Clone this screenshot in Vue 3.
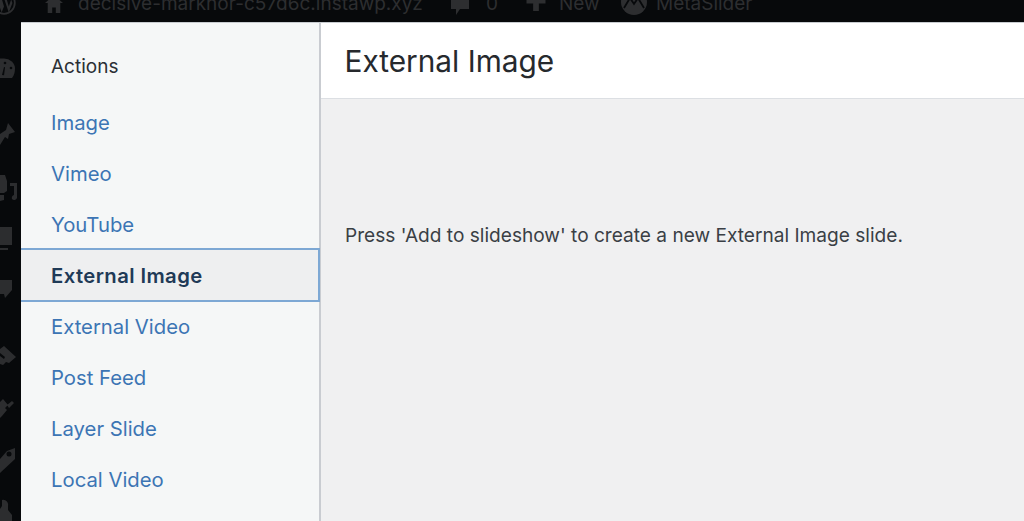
<script setup>
const actions = ['Image', 'Vimeo', 'YouTube', 'External Image', 'External Video', 'Post Feed', 'Layer Slide', 'Local Video']
const activeAction = 'External Image'
</script>

<template>
  <div class="screen">
    <header class="topbar">
      <svg class="bar-icon wp" viewBox="0 0 20 20"><circle cx="10" cy="10" r="9" fill="none" stroke="currentColor" stroke-width="1.500"/><path d="M4 6l4 12 2-5-2-7zm6 0l4 12 3-8-1-3-2 6-2-7z" fill="currentColor"/></svg>
      <svg class="bar-icon home" viewBox="0 0 20 20"><path d="M10 0L0 9h3v11h5v-6h4v6h5V9h3z" fill="currentColor"/></svg>
      <span class="site">decisive-markhor-c57d6c.instawp.xyz</span>
      <svg class="bar-icon comment" viewBox="0 0 20 20"><path d="M1 1h18v12h-9l-4 6v-6H1z" fill="currentColor"/></svg>
      <span class="count">0</span>
      <svg class="bar-icon plus" viewBox="0 0 20 20"><path d="M7 0h6v6h7v5h-7v8H7v-8H0V6h7z" fill="currentColor"/></svg>
      <span class="new">New</span>
      <svg class="bar-icon meta" viewBox="0 0 26 26"><circle cx="13" cy="13" r="13" fill="currentColor"/><path d="M3 19l6-10 4 6 4-6 6 10M9 9l4-6 4 6" fill="none" stroke="#07090b" stroke-width="1.800"/></svg>
      <span class="slider">MetaSlider</span>
    </header>
    <div class="body">
      <aside class="rail">
        <svg viewBox="0 22 21 499" class="rail-icons">
          <g fill="#2c2d2f">
            <path d="M0 58.500h4a11 10 0 0 1 11 10c0 4-1 7-3 9.500H0z"/>
            <path d="M0 134l6-4 2-7 7 9-6 2-1 5-3-2-5 8z"/>
            <path d="M0 175h5l2 6v10l-3 2H0zM0 195h4v5l-4 1zM10 183h7v15a3 3 0 0 1-5 1 3 3 0 0 1 2-4v-9h-4z"/>
            <path d="M0 227h12v18H0zM0 248h8v2H0z"/>
            <path d="M0 280h12v10l-7 8-1-4H0z"/>
            <path d="M0 349l4-3 12 11-7 6-3-1-3 3-3-1zM0 353v3l4 3 1-2z"/>
            <path d="M0 402l3-3 5 6-3 3 2 2-5 6-2 2zM7 405l5-4 2 2-5 5z"/>
            <path d="M0 459l7-8 8-3v11l-15 14z"/>
            <path d="M2 500a5 5 0 0 1 6 6v4l4 5v6H0v-12l2-3z"/>
          </g>
          <g fill="#07090b">
            <circle cx="5" cy="63" r="1.300"/><circle cx="11" cy="68" r="1.300"/>
            <path d="M2 75l2-8 1 .3-1 8z"/>
            <circle cx="9" cy="454" r="2.500"/>
          </g>
        </svg>
      </aside>
      <nav class="menu">
        <h2 class="menu-title">Actions</h2>
        <ul class="menu-list">
          <li v-for="a in actions" :key="a" class="menu-item" :class="{ active: a === activeAction }">{{ a }}</li>
        </ul>
      </nav>
      <main class="content">
        <div class="title-bar"><h1>External Image</h1></div>
        <div class="panel"><p>Press 'Add to slideshow' to create a new External Image slide.</p></div>
      </main>
    </div>
  </div>
</template>

<style>
html, body { margin: 0; background: #07090b; overflow: hidden; }
</style>

<style scoped>
.screen { width: 1024px; height: 521px; display: flex; flex-direction: column; overflow: hidden; font-family: Inter, "Liberation Sans", sans-serif; }
.topbar { height: 22px; flex: none; background: #07090b; color: #2d2e30; position: relative; font-size: 19px; overflow: hidden; }
.topbar span { position: absolute; top: -7px; line-height: 22px; white-space: nowrap; }
.bar-icon { position: absolute; }
.wp { left: -8px; top: -9px; width: 24px; height: 24px; }
.home { left: 44px; top: -5px; width: 20px; height: 18px; }
.site { left: 78px; }
.comment { left: 449px; top: -4px; width: 22px; height: 20px; }
.count { left: 486px; }
.plus { left: 526px; top: -7px; width: 20px; height: 19px; }
.new { left: 559px; }
.meta { left: 621px; top: -11px; width: 26px; height: 26px; }
.slider { left: 656px; }
.body { flex: 1; display: flex; min-height: 0; }
.rail { width: 21px; flex: none; background: #07090b; }
.rail-icons { width: 21px; height: 499px; display: block; }
.menu { width: 298px; flex: none; background: #f5f7f7; border-right: 2px solid #c9ccd1; border-top: 1px solid #c8ccd0; box-sizing: content-box; }
.menu-title { margin: 0; padding: 33px 30px 0; font-size: 19px; line-height: 22px; font-weight: 400; color: #2a2f34; }
.menu-list { list-style: none; margin: 19px 0 0; padding: 0; }
.menu-item { height: 51px; box-sizing: border-box; padding-left: 30px; font-size: 20.300px; line-height: 51px; color: #3c75b4; }
.menu-item.active { height: 54px; margin-top: -2px; margin-bottom: -1px; margin-right: -1px; padding-top: 1px; background: #eeeff0; border: 2px solid #7da8d4; border-left: 0; color: #1f3a57; font-weight: 600; letter-spacing: 0.400px; line-height: 49px; }
.content { flex: 1; display: flex; flex-direction: column; min-width: 0; }
.title-bar { height: 77px; flex: none; box-sizing: border-box; background: #fff; border-top: 1px solid #c8ccd0; border-bottom: 1px solid #dcdfe3; padding-left: 23.500px; }
.title-bar h1 { margin: 0; font-size: 29.800px; line-height: 77px; font-weight: 400; color: #26292d; }
.panel { flex: 1; background: #f0f0f1; padding: 123px 24px 0; }
.panel p { margin: 0; font-size: 19.100px; line-height: 26px; color: #3a3f45; }
</style>
